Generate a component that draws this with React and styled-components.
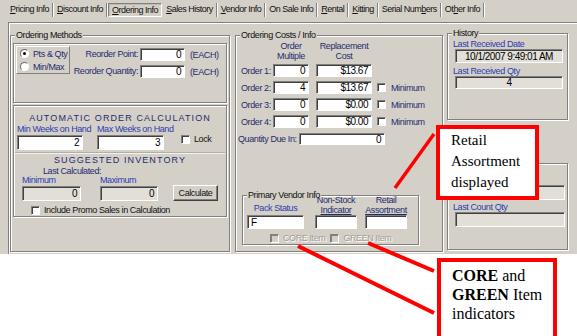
import React from 'react';
import styled, { createGlobalStyle } from 'styled-components';

const face = '#d4d0c8';
const tones = {
  ink: '#111',
  navy: '#1f2b6e',
  blue: '#2b3cae',
  off: '#a19d95',
};

const GlobalStyle = createGlobalStyle`
  html, body { margin: 0; padding: 0; background: #fff; }
  body { font-family: "Liberation Sans", Arial, sans-serif; }
`;

const Page = styled.div`
  position: relative;
  width: 577px;
  height: 336px;
  overflow: hidden;
  background: #fff;
`;

const Window = styled.div`
  height: 254px;
  background: ${face};
  font-size: 9px;
  letter-spacing: -0.4px;
  color: ${tones.ink};
  overflow: hidden;
`;

const TabStrip = styled.div`
  display: flex;
  height: 22px;
  padding: 3px 0 0 7px;
  box-sizing: border-box;
  letter-spacing: -0.5px;
`;

const Tab = styled.div`
  box-sizing: border-box;
  height: 14px;
  line-height: 13px;
  padding: 0 3px;
  margin-right: 1px;
  white-space: nowrap;
  border-right: 1px solid #808080;
  box-shadow: 1px 0 0 #fff;
  ${(p) =>
    p.$active &&
    `
    border: 1px solid;
    border-color: #808080 #fff #fff #808080;
    box-shadow: inset 1px 1px 0 #bdb9b1;
    line-height: 12px;
  `}
`;

const TabPage = styled.div`
  margin-left: 8px;
  height: 232px;
  box-sizing: border-box;
  border-top: 1px solid #808080;
  border-left: 1px solid #808080;
  box-shadow: inset 1px 1px 0 #fff;
  display: flex;
  align-items: flex-start;
  padding: 6px 0 0 1px;
`;

const GroupBox = styled.fieldset`
  margin: ${(p) => p.$mt || 0}px 0 0 ${(p) => p.$ml || 0}px;
  padding: 0 1px;
  min-width: 0;
  box-sizing: border-box;
  width: ${(p) => p.$w}px;
  height: ${(p) => p.$h}px;
  border: 1px solid #808080;
  box-shadow: inset 1px 1px 0 #fff, 1px 1px 0 #fff;
  display: flex;
  flex-direction: column;
`;

const Legend = styled.legend`
  margin-left: 3px;
  padding: 0 1px;
  line-height: 12px;
  font-size: 9px;
  background: ${face};
  color: ${tones.ink};
`;

const Panel = styled.div`
  box-sizing: border-box;
  height: ${(p) => p.$h}px;
  margin: 2px 1px 0;
  border: 1px solid #808080;
  box-shadow: inset 1px 1px 0 #fff, 1px 1px 0 #fff;
  display: flex;
  flex-direction: ${(p) => (p.$col ? 'column' : 'row')};
  padding: ${(p) => p.$pad || '1px'};
`;

const RadioBox = styled.div`
  box-sizing: border-box;
  width: 54px;
  height: 28px;
  margin: 1px 0 0 1px;
  border: 1px solid;
  border-color: #fff #808080 #808080 #fff;
  display: flex;
  flex-direction: column;
  padding: 0 0 0 3px;
`;

const RadioRow = styled.div`
  display: flex;
  align-items: center;
  height: 13px;
  gap: 4px;
`;

const Radio = styled.span`
  position: relative;
  box-sizing: border-box;
  width: 9px;
  height: 9px;
  border-radius: 50%;
  background: #fff;
  border: 1px solid;
  border-color: #6f6c66 #fff #fff #6f6c66;
  &::after {
    content: '';
    display: ${(p) => (p.$on ? 'block' : 'none')};
    position: absolute;
    left: 2px;
    top: 2px;
    width: 3px;
    height: 3px;
    border-radius: 50%;
    background: #000;
  }
`;

const Caption = styled.span`
  color: ${(p) => tones[p.$tone || 'ink']};
  line-height: ${(p) => p.$lh || 12}px;
  padding-left: ${(p) => p.$pl || 0}px;
  white-space: nowrap;
`;

const ReorderGrid = styled.div`
  display: grid;
  grid-template-columns: 66px 45px auto;
  grid-auto-rows: 13px;
  column-gap: 2px;
  row-gap: 4px;
  margin: 3px 0 0 2px;
  align-items: center;
`;

const FieldLabel = styled.span`
  color: ${tones.navy};
  text-align: right;
  line-height: 13px;
  white-space: nowrap;
`;

const Unit = styled.span`
  color: ${tones.navy};
  margin-left: 3px;
  white-space: nowrap;
`;

const Field = styled.div`
  box-sizing: border-box;
  flex: none;
  width: ${(p) => p.$w}px;
  height: ${(p) => p.$h || 13}px;
  margin-top: ${(p) => p.$mt || 0}px;
  background: ${(p) => (p.$off ? '#e2dfd8' : '#fff')};
  border: 1px solid;
  border-color: #808080 #fff #fff #808080;
  box-shadow: inset 1px 1px 0 #404040;
  font-size: 10px;
  letter-spacing: -0.5px;
  line-height: ${(p) => (p.$h || 13) - 1}px;
  text-align: ${(p) => p.$align || 'right'};
  padding: 0 3px;
  color: #000;
  white-space: nowrap;
  overflow: hidden;
`;

const Title = styled.div`
  text-align: center;
  color: ${tones.navy};
  letter-spacing: 1.1px;
  line-height: 12px;
`;

const Row = styled.div`
  display: flex;
  align-items: flex-end;
  padding-left: ${(p) => p.$pl || 0}px;
  margin-top: ${(p) => p.$mt || 0}px;
`;

const FieldCol = styled.div`
  display: flex;
  flex-direction: column;
  flex: none;
  width: ${(p) => p.$w}px;
  margin-left: ${(p) => p.$ml || 0}px;
`;

const Check = styled.span`
  box-sizing: border-box;
  flex: none;
  width: 9px;
  height: 9px;
  background: ${(p) => (p.$off ? face : '#fff')};
  border: 1px solid;
  border-color: #808080 #fff #fff #808080;
  box-shadow: inset 1px 1px 0 ${(p) => (p.$off ? '#808080' : '#404040')};
`;

const CheckLabel = styled.div`
  display: flex;
  align-items: center;
  gap: ${(p) => p.$gap || 4}px;
  margin-left: ${(p) => p.$ml || 0}px;
  margin-bottom: ${(p) => p.$mb || 0}px;
  color: ${(p) => tones[p.$tone || 'ink']};
  white-space: nowrap;
  ${(p) => p.$tone === 'off' && 'text-shadow: 1px 1px 0 #fff;'}
`;

const Separator = styled.div`
  margin-top: 2px;
  border-top: 1px solid #b3afa7;
  border-bottom: 1px solid #f4f2ee;
`;

const Button = styled.div`
  box-sizing: border-box;
  width: 45px;
  height: 16px;
  margin-left: 15px;
  border: 1px solid;
  border-color: #fff #404040 #404040 #fff;
  box-shadow: inset -1px -1px 0 #808080;
  text-align: center;
  line-height: 14px;
  color: #111;
`;

const HeadRow = styled.div`
  display: flex;
  margin: 0 0 0 36px;
`;

const ColHead = styled.div`
  width: ${(p) => p.$w}px;
  margin-left: ${(p) => p.$ml || 0}px;
  text-align: center;
  line-height: ${(p) => p.$lh || 10}px;
  color: ${(p) => tones[p.$tone || 'navy']};
  margin-bottom: ${(p) => p.$mb || 0}px;
  white-space: nowrap;
`;

const CostRows = styled.div`
  display: flex;
  flex-direction: column;
  gap: 4px;
  margin: 3px 0 0 4px;
`;

const CostRow = styled.div`
  display: flex;
  align-items: center;
  height: 13px;
`;

const RowLabel = styled.span`
  width: ${(p) => p.$w}px;
  flex: none;
  color: ${tones.navy};
  white-space: nowrap;
`;

const Gap = styled.span`
  flex: none;
  width: ${(p) => p.$w}px;
`;

const QtyRow = styled.div`
  display: flex;
  align-items: center;
  margin: 5px 0 0 1px;
`;

const VendorBox = styled(GroupBox)`
  margin: auto 0 6px 5px;
`;

const VendorCols = styled.div`
  display: flex;
  align-items: flex-end;
  margin: -6px 0 0 3px;
`;

const CheckRow = styled.div`
  display: flex;
  align-items: center;
  margin: 4px 0 0 26px;
`;

const SideColumn = styled.div`
  display: flex;
  flex-direction: column;
  width: 121px;
  margin: -2px 0 0 4px;
`;

const HistLabel = styled.div`
  color: ${tones.blue};
  line-height: 10px;
  padding-left: 4px;
  margin-top: ${(p) => p.$mt || 0}px;
  white-space: nowrap;
`;

const HistField = styled(Field)`
  margin-left: 6px;
`;

const Callout = styled.div`
  position: absolute;
  box-sizing: border-box;
  left: ${(p) => p.$x}px;
  top: ${(p) => p.$y}px;
  width: ${(p) => p.$w}px;
  height: ${(p) => p.$h}px;
  border: 4px solid #f00;
  background: #fff;
  padding: ${(p) => p.$pad};
  font-family: "Liberation Serif", "Times New Roman", serif;
  font-size: ${(p) => p.$fs}px;
  line-height: ${(p) => p.$lh}px;
  color: #000;
`;

const Leaders = styled.svg`
  position: absolute;
  left: 0;
  top: 0;
  pointer-events: none;
`;

const tabs = [
  ['Pricing Info', 0],
  ['Discount Info', 0],
  ['Ordering Info', 0],
  ['Sales History', 0],
  ['Vendor Info', 0],
  ['On Sale Info', -1],
  ['Rental', 0],
  ['Kitting', 0],
  ['Serial Numbers', 10],
  ['Other Info', 2],
];

const costs = [
  ['Order 1:', '0', '$13.67', false],
  ['Order 2:', '4', '$13.67', true],
  ['Order 3:', '0', '$0.00', true],
  ['Order 4:', '0', '$0.00', true],
];

const Mnemonic = ({ text, at }) =>
  at < 0 ? (
    text
  ) : (
    <>
      {text.slice(0, at)}
      <u>{text[at]}</u>
      {text.slice(at + 1)}
    </>
  );

const App = () => {
  return (
    <Page>
      <GlobalStyle />
      <Window>
        <TabStrip>
          {tabs.map(([label, at]) => (
            <Tab key={label} $active={label === 'Ordering Info'}>
              <Mnemonic text={label} at={at} />
            </Tab>
          ))}
        </TabStrip>

        <TabPage>
          <GroupBox $w={220} $h={223}>
            <Legend>Ordering Methods</Legend>
            <Panel $h={60}>
              <RadioBox>
                <RadioRow>
                  <Radio $on />
                  <Caption $tone="navy">Pts &amp; Qty</Caption>
                </RadioRow>
                <RadioRow>
                  <Radio />
                  <Caption $tone="navy">Min/Max</Caption>
                </RadioRow>
              </RadioBox>
              <ReorderGrid>
                <FieldLabel>Reorder Point:</FieldLabel>
                <Field $w={45}>0</Field>
                <Unit>(EACH)</Unit>
                <FieldLabel>Reorder Quantity:</FieldLabel>
                <Field $w={45}>0</Field>
                <Unit>(EACH)</Unit>
              </ReorderGrid>
            </Panel>

            <Panel $h={112} $col $pad="6px 1px 0">
              <Title>AUTOMATIC ORDER CALCULATION</Title>
              <Row $pl={2}>
                <FieldCol $w={66}>
                  <Caption $tone="blue" $lh={10}>Min Weeks on Hand</Caption>
                  <Field $w={66} $h={15} $mt={1}>2</Field>
                </FieldCol>
                <FieldCol $w={67} $ml={14}>
                  <Caption $tone="blue" $lh={10}>Max Weeks on Hand</Caption>
                  <Field $w={67} $h={15} $mt={1}>3</Field>
                </FieldCol>
                <CheckLabel $ml={17} $mb={6}>
                  <Check />
                  Lock
                </CheckLabel>
              </Row>
              <Separator />
              <Title>SUGGESTED INVENTORY</Title>
              <Caption $tone="navy" $lh={10} $pl={28}>
                Last Calculated:
              </Caption>
              <Row $pl={7}>
                <FieldCol $w={59}>
                  <Caption $tone="blue" $lh={9}>Minimum</Caption>
                  <Field $w={59} $h={15} $mt={1} $off>0</Field>
                </FieldCol>
                <FieldCol $w={58} $ml={19}>
                  <Caption $tone="blue" $lh={9}>Maximum</Caption>
                  <Field $w={58} $h={15} $mt={1} $off>0</Field>
                </FieldCol>
                <Button>Calculate</Button>
              </Row>
              <Row $pl={16} $mt={4}>
                <CheckLabel>
                  <Check />
                  Include Promo Sales in Calculation
                </CheckLabel>
              </Row>
            </Panel>
          </GroupBox>

          <GroupBox $w={208} $h={223} $ml={5}>
            <Legend>Ordering Costs / Info</Legend>
            <HeadRow>
              <ColHead $w={36}>
                Order
                <br />
                Multiple
              </ColHead>
              <ColHead $w={56} $ml={7}>
                Replacement
                <br />
                Cost
              </ColHead>
            </HeadRow>
            <CostRows>
              {costs.map(([label, mult, cost, min]) => (
                <CostRow key={label}>
                  <RowLabel $w={32}>{label}</RowLabel>
                  <Field $w={36}>{mult}</Field>
                  <Gap $w={7} />
                  <Field $w={56}>{cost}</Field>
                  {min && (
                    <CheckLabel $ml={5} $gap={5} $tone="navy">
                      <Check />
                      Minimum
                    </CheckLabel>
                  )}
                </CostRow>
              ))}
            </CostRows>
            <QtyRow>
              <RowLabel $w={61}>Quantity Due In:</RowLabel>
              <Field $w={86} $h={12}>0</Field>
            </QtyRow>

            <VendorBox $w={177} $h={56}>
              <Legend>Primary Vendor Info</Legend>
              <VendorCols>
                <FieldCol $w={57}>
                  <ColHead $w={57} $mb={2} $tone="blue">Pack Status</ColHead>
                  <Field $w={57} $h={14} $align="left">
                    F
                  </Field>
                </FieldCol>
                <FieldCol $w={42} $ml={11}>
                  <ColHead $w={42}>
                    Non-Stock
                    <br />
                    <u>Indicator</u>
                  </ColHead>
                  <Field $w={42} $h={14} />
                </FieldCol>
                <FieldCol $w={42} $ml={8}>
                  <ColHead $w={42}>
                    Retail
                    <br />
                    <u>Assortment</u>
                  </ColHead>
                  <Field $w={42} $h={14} />
                </FieldCol>
              </VendorCols>
              <CheckRow>
                <CheckLabel $tone="off">
                  <Check $off />
                  CORE Item
                </CheckLabel>
                <CheckLabel $tone="off" $ml={5}>
                  <Check $off />
                  GREEN Item
                </CheckLabel>
              </CheckRow>
            </VendorBox>
          </GroupBox>

          <SideColumn>
            <GroupBox $w={121} $h={93}>
              <Legend>History</Legend>
              <HistLabel>Last Received Date</HistLabel>
              <HistField $w={108} $h={14} $off $align="center">
                10/1/2007 9:49:01 AM
              </HistField>
              <HistLabel $mt={3}>Last Received Qty</HistLabel>
              <HistField $w={108} $h={13} $off $align="center">
                4
              </HistField>
            </GroupBox>
            <GroupBox $w={121} $h={87} $mt={43}>
              <HistField $w={110} $h={15} $mt={21} $off />
              <HistLabel $mt={2}>Last Count Qty</HistLabel>
              <HistField $w={110} $h={15} $off />
            </GroupBox>
          </SideColumn>
        </TabPage>
      </Window>

      <Leaders width="577" height="336">
        <g stroke="#f00" strokeLinecap="butt">
          <line x1="395" y1="188" x2="434" y2="134" strokeWidth="3.5" />
          <line x1="298" y1="246" x2="434" y2="313" strokeWidth="4" />
          <line x1="368" y1="243" x2="434" y2="271" strokeWidth="4" />
        </g>
      </Leaders>

      <Callout $x={436} $y={125} $w={103} $h={75} $pad="1px 0 0 11px" $fs={15} $lh={21}>
        Retail
        <br />
        Assortment
        <br />
        displayed
      </Callout>
      <Callout $x={437} $y={258} $w={120} $h={90} $pad="4px 0 0 11px" $fs={16} $lh={19}>
        <b>CORE</b> and
        <br />
        <b>GREEN</b> Item
        <br />
        indicators
      </Callout>
    </Page>
  );
};

export default App;
